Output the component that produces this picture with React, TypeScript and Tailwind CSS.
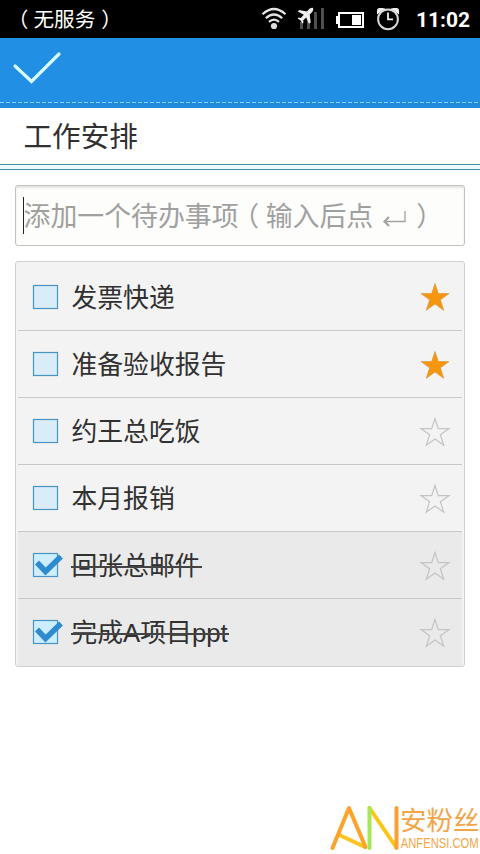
import { useState } from 'react';
import clsx from 'clsx';

interface Task {
  id: number;
  title: string;
  done: boolean;
  starred: boolean;
}

const initialTasks: Task[] = [
  { id: 1, title: '发票快递', done: false, starred: true },
  { id: 2, title: '准备验收报告', done: false, starred: true },
  { id: 3, title: '约王总吃饭', done: false, starred: false },
  { id: 4, title: '本月报销', done: false, starred: false },
  { id: 5, title: '回张总邮件', done: true, starred: false },
  { id: 6, title: '完成A项目ppt', done: true, starred: false },
];

function StatusBar() {
  return (
    <div className="flex h-[38px] items-center bg-black text-white">
      <span className="ml-[18px] flex h-[38px] pt-px text-[20.600px] leading-[38px]">
        <span className="w-[15.500px] [font-feature-settings:'halt']">（</span>
        <span>无服务</span>
        <span className="ml-[6px] [font-feature-settings:'halt']">）</span>
      </span>
      <svg className="ml-auto h-[38px] w-[146px] shrink-0" viewBox="260 0 146 38" fill="none">
        {/* wifi */}
        <g stroke="#e4e4e4" strokeWidth="2.200">
          <path d="M262.5 14.2Q274 3.8 285.5 14.2" />
          <path d="M265.8 18.2Q274 10.8 282.2 18.2" />
          <path d="M269 21.8Q274 17.4 279 21.8" />
        </g>
        <circle cx="274" cy="26" r="3.1" fill="#ddd" />
        {/* signal bars */}
        <path d="M300 22h3v7h-3zM307 18h3v11h-3zM314 12h3v17h-3zM321 8h3v21h-3z" fill="#4f4f4f" />
        <path
          d="M313 8c-1.500-.6-3 .2-4.200 1.500l-2 2-7.500-1.500-1.500 1.500 6 3.300-3 3.200-2.300-.4-.8 1 3 1.900 1.600 3.100 1.200-.9-.3-2.500 3-2.700 2.800 6.300 1.700-1.400-1-7.900 2-2c1.300-1.400 2-2.900 1.300-4.500z"
          fill="#eee"
        />
        {/* battery */}
        <rect x="339" y="13" width="24" height="14" stroke="#fff" strokeWidth="2" />
        <rect x="336" y="16" width="3" height="8" fill="#fff" />
        <rect x="352" y="15" width="9" height="10" fill="#fff" />
        {/* alarm clock */}
        <path d="M377 14.500V10.500q0-2.500 2.500-2.500h3q3 0 4 2l-6 2zM399 14.500V10.500q0-2.500-2.500-2.500h-3q-3 0-4 2l6 2z" fill="#eee" />
        <circle cx="388" cy="19.300" r="9.900" fill="#000" stroke="#d8d8d8" strokeWidth="2" />
        <path d="M388 12.500v6.800h5" stroke="#eee" strokeWidth="1.800" />
      </svg>
      <span className="mr-[9px] ml-[10px] w-[55px] pt-px font-[Roboto,sans-serif] text-[21px] leading-[38px] font-bold whitespace-nowrap">
        11:02
      </span>
    </div>
  );
}

function Header() {
  return (
    <header className="flex h-[70px] flex-col justify-between bg-[#218fe3]">
      <svg className="mt-[12px] ml-[12px] h-[36px] w-[50px]" viewBox="0 0 50 36" fill="none">
        <path d="M3 16L19.500 31.500L47 4" stroke="#d8fcff" strokeWidth="3.200" strokeLinecap="round" />
      </svg>
      <svg className="h-[6px] w-full" viewBox="0 0 480 6">
        <rect y="1" width="480" height="5" fill="#208bdc" />
        <path d="M0 .5H480" stroke="#8bd0f6" strokeWidth="1" strokeDasharray="4 2" />
      </svg>
    </header>
  );
}

function Checkbox({ checked, onToggle }: { checked: boolean; onToggle: () => void }) {
  return (
    <button type="button" onClick={onToggle} className="ml-[14px] h-[26px] w-[32px] shrink-0">
      <svg className="h-[26px] w-[32px]" viewBox="0 0 32 26" fill="none">
        <rect
          x="1.500"
          y="1.500"
          width="24"
          height="23"
          fill={checked ? '#cdeefe' : '#d9ecf8'}
          stroke="#4a94c4"
          strokeWidth="1.200"
        />
        {checked && <path d="M5 10.500L13.500 19.500L29 4.500" stroke="#2f8ad0" strokeWidth="5.500" />}
      </svg>
    </button>
  );
}

function Star({ filled, onToggle }: { filled: boolean; onToggle: () => void }) {
  return (
    <button type="button" onClick={onToggle} className="mt-px mr-[11px] ml-auto size-[32px] shrink-0">
      <svg className="size-[32px]" viewBox="0 0 32 32">
        <path
          d="M16 2.500L19.300 12.600H30L21.400 18.800L24.700 29.300L16 22.900L7.300 29.300L10.600 18.800L2 12.600H12.700Z"
          fill={filled ? '#f6960f' : 'none'}
          stroke={filled ? '#d9983c' : '#c4c4c4'}
          strokeWidth={filled ? 0.7 : 1.2}
        />
      </svg>
    </button>
  );
}

function Watermark() {
  return (
    <div className="absolute right-0 bottom-0 flex h-[52px] w-[150px]">
      <svg className="h-[52px] w-[70px] shrink-0" viewBox="330 802 70 52" fill="none" strokeLinecap="round" strokeWidth="4">
        <path d="M340.500 835.500L365 847" stroke="#fcc41c" />
        <path d="M332.500 848L349 808L365.500 847" stroke="#fca32b" strokeLinejoin="round" />
        <path d="M369.500 808L396 847" stroke="#fcc618" />
        <path d="M369.500 808V848" stroke="#a7e65a" />
        <path d="M396.500 808V848" stroke="#fba030" />
      </svg>
      <div className="flex flex-col text-[#f3a548]">
        <span className="mt-[5px] h-[28px] text-[26.500px] leading-[28px] whitespace-nowrap">安粉丝</span>
        <span className="w-max origin-left scale-x-[0.8] pl-px text-[14px] leading-[16px] whitespace-nowrap">
          ANFENSI.COM
        </span>
      </div>
    </div>
  );
}

export default function App() {
  const [tasks, setTasks] = useState<Task[]>(initialTasks);

  const toggle = (id: number, key: 'done' | 'starred') => {
    setTasks(tasks.map((task) => (task.id === id ? { ...task, [key]: !task[key] } : task)));
  };

  return (
    <div className="relative h-[854px] w-[480px] overflow-hidden bg-white font-['Liberation_Sans','Noto_Sans_CJK_SC',sans-serif] text-[#303030]">
      <StatusBar />
      <Header />

      <h1 className="h-[56px] pt-px pl-[23.500px] text-[28.600px] leading-[56px]">工作安排</h1>
      <div className="h-[6px] border-y border-[#4b8aa8] bg-[#eefcff]" />

      {/* New task input */}
      <div className="mx-[15px] mt-[15px] flex h-[61px] items-center rounded-[3px] border border-[#c2c2c2] bg-[#fdfdfb] pl-[7px] text-[26.900px] text-[#a0a0a0] shadow-[inset_0_2px_2px_#e4e4e4]">
        <span className="h-[37px] w-px bg-[#222]" />
        <span className="-ml-[0.500px] pt-[3px] whitespace-nowrap">添加一个待办事项</span>
        <span className="ml-[7px] w-[20px] pt-[3px] [font-feature-settings:'halt']">（</span>
        <span className="pt-[3px] whitespace-nowrap">输入后点</span>
        <svg className="mt-[7px] ml-[9px] h-[18px] w-[26px]" viewBox="0 0 26 18" fill="none" stroke="#a3a3a3">
          <path d="M23 1V11.500H3" strokeWidth="1.300" />
          <path d="M7 7L2.500 11.500L7 16" strokeWidth="2.200" />
        </svg>
        <span className="ml-[8px] pt-[3px] [font-feature-settings:'halt']">）</span>
      </div>

      {/* Task list */}
      <ul className="mx-[15px] mt-[15px] rounded-[3px] border border-[#cfcfcf] bg-[#f3f3f3] px-[2px] pt-px">
        {tasks.map((task) => (
          <li
            key={task.id}
            className={clsx(
              'flex h-[67px] items-center border-b border-[#c9c9c9] first:h-[68px] last:border-transparent',
              task.done && 'bg-[#eaeaea]'
            )}
          >
            <Checkbox checked={task.done} onToggle={() => toggle(task.id, 'done')} />
            <span className="relative mt-[2px] ml-[7.500px] text-[25.800px] leading-[40px] whitespace-nowrap">
              {task.title}
              {task.done && <span className="absolute inset-x-[-1px] top-[20px] h-[1.500px] bg-[#444]" />}
            </span>
            <Star filled={task.starred} onToggle={() => toggle(task.id, 'starred')} />
          </li>
        ))}
      </ul>

      <Watermark />
    </div>
  );
}
